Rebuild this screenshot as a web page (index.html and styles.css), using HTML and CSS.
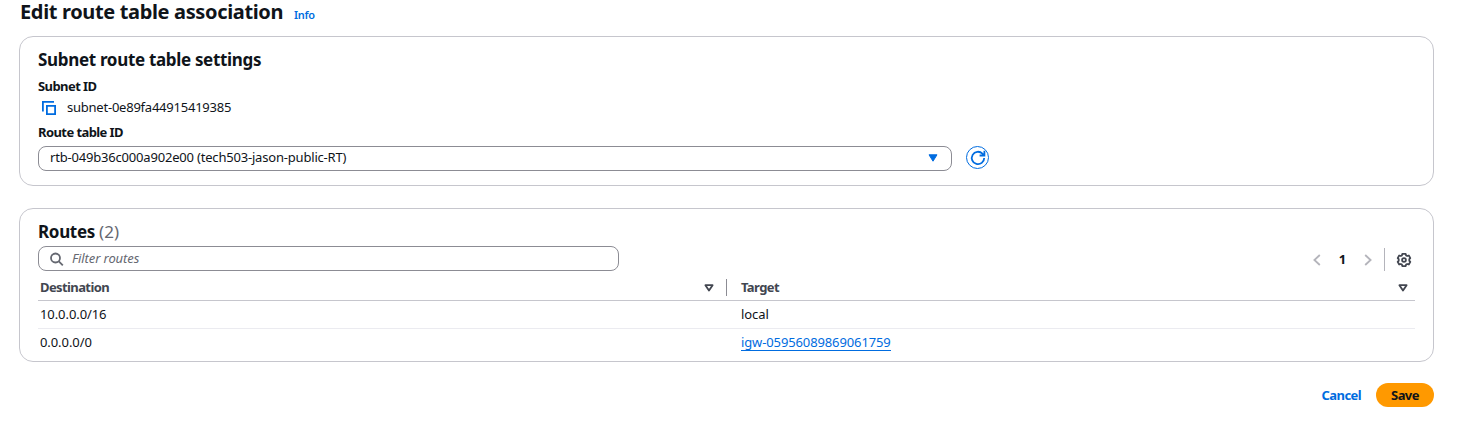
FILE: index.html
```html
<!DOCTYPE html>
<html lang="en">
<head>
<meta charset="utf-8">
<title>Edit route table association</title>
<link rel="stylesheet" href="styles.css">
</head>
<body>
<main class="page">
  <header class="page-header">
    <h1 class="title">Edit route table association</h1>
    <a class="info">Info</a>
  </header>

  <section class="card settings">
    <h2 class="card-title">Subnet route table settings</h2>
    <div class="label">Subnet ID</div>
    <div class="copy-row">
      <svg class="copy" width="16" height="16" viewBox="0 0 16 16"><path d="M1.9 11.5V1.9H13M5.9 5.9h8.2v8.2H5.9z"/></svg>
      <span class="subnet-id">subnet-0e89fa44915419385</span>
    </div>
    <div class="label route-label">Route table ID</div>
    <div class="select-row">
      <div class="select">
        <span class="select-value">rtb-049b36c000a902e00 (tech503-jason-public-RT)</span>
        <svg width="10" height="8" viewBox="0 0 10 8"><path class="caret" d="M1 .8h8L5 7.2z"/></svg>
      </div>
      <button class="refresh" aria-label="Refresh">
        <svg width="16" height="16" viewBox="0 0 16 16"><path d="M14.2 8A6.2 6.2 0 1 1 12.4 3.6L14.2 5.2M14.4 .8v4.7H9.6"/></svg>
      </button>
    </div>
  </section>

  <section class="card routes">
    <h2 class="card-title">Routes <span class="count">(2)</span></h2>
    <div class="tools">
      <div class="filter">
        <svg width="14" height="14" viewBox="0 0 14 14"><circle cx="5.5" cy="6" r="4.5"/><path d="M8.8 9.3l4 4"/></svg>
        <span class="placeholder">Filter routes</span>
      </div>
      <div class="pager">
        <svg width="8" height="12" viewBox="0 0 8 12"><path d="M6.8 1L1.4 6l5.4 5"/></svg>
        <span class="page-number">1</span>
        <svg width="8" height="12" viewBox="0 0 8 12"><path d="M1.2 1l5.4 5-5.4 5"/></svg>
        <span class="divider"></span>
        <svg class="gear" width="16" height="16" viewBox="0 0 16 16"><path d="M6.3 1.9h3.4l.4 1.5 1.1.6 1.6-.5 1.5 2.6-1 1.1v1.6l1 1.1-1.5 2.6-1.6-.5-1.1.6-.4 1.5H6.3l-.4-1.5-1.1-.6-1.6.5-1.5-2.6 1-1.1V7.2l-1-1.1 1.5-2.6 1.6.5 1.1-.6z"/><circle cx="8" cy="8" r="1.9"/></svg>
      </div>
    </div>
    <div class="table">
      <div class="row head">
        <div class="cell first">Destination<svg width="10" height="8" viewBox="0 0 10 8"><path class="sort" d="M1.4 1.2h7.2L5 6.6z"/></svg></div>
        <div class="cell">Target<svg width="10" height="8" viewBox="0 0 10 8"><path class="sort" d="M1.4 1.2h7.2L5 6.6z"/></svg></div>
      </div>
      <div class="row">
        <div class="cell first">10.0.0.0/16</div>
        <div class="cell">local</div>
      </div>
      <div class="row">
        <div class="cell first">0.0.0.0/0</div>
        <div class="cell"><a class="link">igw-05956089869061759</a></div>
      </div>
    </div>
  </section>

  <footer class="actions">
    <a class="cancel">Cancel</a>
    <button class="save">Save</button>
  </footer>
</main>
</body>
</html>
```
FILE: styles.css
```css
* { box-sizing: border-box; }
body { margin: 0; background: #fff; color: #0f141a; font: 13px/16px "Noto Sans", "Open Sans", sans-serif; white-space: nowrap; }
h1, h2 { margin: 0; font-weight: 700; }
button { font: inherit; letter-spacing: inherit; padding: 0; }
svg { display: block; flex: none; fill: none; }
.page { padding: 0 40px 0 19px; }
.page-header { display: flex; height: 36px; padding-left: 1px; }
.title { font-size: 20px; line-height: 24px; width: 274px; letter-spacing: -.35px; }
.info { color: #006ce0; font-size: 11px; font-weight: 600; letter-spacing: -.3px; padding-top: 7px; }
.card { border: 1px solid #c6c6cd; border-radius: 14px; padding: 13px 18px 0; }
.settings { height: 150px; }
.card-title { font-size: 17px; line-height: 20px; letter-spacing: -.32px; }
.label { font-weight: 700; margin-top: 8px; letter-spacing: -.58px; }
.copy-row { display: flex; align-items: center; gap: 10px; margin: 5px 0 0 3px; height: 16px; }
.copy { stroke: #006ce0; stroke-width: 1.8; margin-top: 1px; }
.subnet-id { letter-spacing: -.23px; }
.route-label { margin-top: 9px; }
.select-row { display: flex; align-items: center; gap: 14px; margin-top: 6px; }
.select { width: 914px; height: 25px; border: 1px solid #8c8c94; border-radius: 8px; padding: 0 13px 2px 11px; display: flex; align-items: center; justify-content: space-between; }
.select-value { letter-spacing: -.19px; padding-bottom: 1px; }
.caret { fill: #006ce0; stroke: #006ce0; stroke-linejoin: round; }
.refresh { width: 23px; height: 23px; border: 1px solid #006ce0; border-radius: 50%; background: #fff; display: grid; place-items: center; margin-bottom: 2px; }
.refresh svg { stroke: #006ce0; stroke-width: 1.8; }
.routes { margin-top: 22px; height: 154px; }
.count { color: #656871; font-weight: 400; letter-spacing: 0; }
.tools { display: flex; justify-content: space-between; margin-top: 4px; height: 25px; }
.filter { display: flex; align-items: center; gap: 8px; width: 581px; border: 1px solid #8c8c94; border-radius: 8px; padding-left: 11px; color: #656871; font-style: italic; }
.filter svg { stroke: #656871; stroke-width: 1.8; }
.placeholder { letter-spacing: -.1px; padding-bottom: 1px; }
.pager { display: flex; align-items: center; padding: 2px 3px 0 0; }
.pager svg { stroke: #b4b4bb; stroke-width: 1.8; }
.page-number { width: 43px; text-align: center; font-weight: 700; padding-bottom: 1px; }
.divider { width: 1px; height: 23px; background: #b4b4bb; margin: 0 11px 0 12px; }
.pager .gear { stroke: #424650; stroke-width: 1.8; stroke-linejoin: round; }
.table { margin-top: 4px; }
.row { display: grid; grid-template-columns: 689px 1fr; height: 28px; border-bottom: 1px solid #ebebf0; letter-spacing: -.08px; }
.row:last-child { border: 0; }
.head { height: 26px; border-color: #c6c6cd; color: #424650; font-weight: 700; letter-spacing: -.6px; }
.cell { display: flex; align-items: center; justify-content: space-between; padding: 0 7px 2px 14px; }
.first { padding: 0 13px 2px 2px; }
.row:last-child .cell { padding-bottom: 1px; }
.row:last-child .first { padding-bottom: 2px; }
.head .cell svg { margin-top: 2px; }
.head .first { position: relative; }
.head .first::after { content: ""; position: absolute; right: 0; top: 4px; width: 1px; height: 17px; background: #8c8c94; }
.sort { stroke: #424650; stroke-width: 1.8; stroke-linejoin: round; }
.link { color: #006ce0; border-bottom: 1px solid #006ce0; line-height: 16px; letter-spacing: -.12px; }
.actions { display: flex; align-items: center; justify-content: flex-end; gap: 15px; margin-top: 21px; font-weight: 700; letter-spacing: -.58px; }
.cancel { color: #006ce0; padding-bottom: 1px; }
.save { width: 58px; height: 24px; border: 0; border-radius: 12px; background: #ff9900; color: #0f141a; font-weight: 700; padding-bottom: 1px; }
```
